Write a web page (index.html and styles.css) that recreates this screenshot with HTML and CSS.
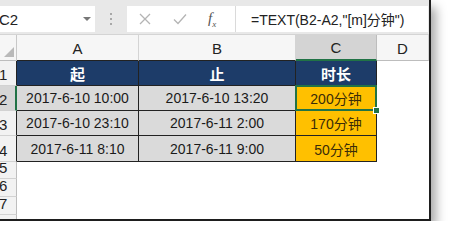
FILE: index.html
```html
<!DOCTYPE html>
<html lang="zh">
<head>
  <meta charset="UTF-8" />
  <title>TEXT 分钟</title>
  <link rel="stylesheet" href="styles.css">
</head>
<body>

  <div class="window">
    <!-- formula bar -->
    <div class="formula-bar">
      <div class="name-box"><span>C2</span><span class="caret"></span></div>
      <div class="grip"><i></i><i></i><i></i></div>
      <div class="buttons">
        <svg class="btn" width="12" height="12" viewBox="0 0 12 12"><path d="M1 1 L11 11 M11 1 L1 11" stroke="#b4b4b4" stroke-width="1.3" fill="none"/></svg>
        <svg class="btn" width="14" height="12" viewBox="0 0 14 12"><path d="M1 6.5 L5 10.5 L13 1.5" stroke="#b4b4b4" stroke-width="1.3" fill="none"/></svg>
        <span class="fx">f<sub>x</sub></span>
      </div>
      <div class="formula">=TEXT(B2-A2,"[m]分钟")</div>
    </div>

    <!-- sheet -->
    <div class="grid">
      <div class="corner"><span class="tri"></span></div>
      <div class="col-head edge">A</div>
      <div class="col-head edge">B</div>
      <div class="col-head selected">C</div>
      <div class="col-head">D</div>

      <div class="row-head edge">1</div>
      <div class="cell title">起</div>
      <div class="cell title">止</div>
      <div class="cell title">时长</div>
      <div class="blank"></div>

      <div class="row-head selected">2</div>
      <div class="cell date">2017-6-10 10:00</div>
      <div class="cell date">2017-6-10 13:20</div>
      <div class="cell result active">200分钟</div>
      <div class="blank"></div>

      <div class="row-head edge">3</div>
      <div class="cell date">2017-6-10 23:10</div>
      <div class="cell date">2017-6-11 2:00</div>
      <div class="cell result">170分钟</div>
      <div class="blank"></div>

      <div class="row-head edge">4</div>
      <div class="cell date">2017-6-11 8:10</div>
      <div class="cell date">2017-6-11 9:00</div>
      <div class="cell result">50分钟</div>
      <div class="blank"></div>

      <div class="row-head">5</div>
      <div class="blank wide"></div>
      <div class="row-head">6</div>
      <div class="blank wide"></div>
      <div class="row-head">7</div>
      <div class="blank wide"></div>
      <div class="row-head"></div>
      <div class="blank wide"></div>
    </div>
  </div>

</body>
</html>
```

FILE: styles.css
```css
body {
  margin: 0;
  background: #fff;
  font-family: 'Liberation Sans', 'Noto Sans CJK SC', sans-serif;
  color: #1a1a1a;
}

.window {
  width: 429px;
  height: 219px;
  border-right: 2px solid #1e1e1e;
  border-bottom: 2px solid #1e1e1e;
  box-shadow: 5px 7px 10px rgba(0, 0, 0, 0.35);
  background: #fff;
  overflow: hidden;
}

/* formula bar */
.formula-bar {
  display: flex;
  height: 35px;
  box-sizing: border-box;
  padding: 6px 1px 2px 0;
  background: #e8e8e8;
  border-bottom: 1px solid #d4d4d4;
}

.name-box {
  width: 95px;
  display: flex;
  align-items: center;
  justify-content: space-between;
  padding-right: 4px;
  box-sizing: border-box;
  background: #fff;
  font-size: 15px;
  color: #222;
  text-indent: -1px;
}

.caret {
  width: 0;
  height: 0;
  border-left: 4px solid transparent;
  border-right: 4px solid transparent;
  border-top: 4px solid #777;
}

.grip {
  width: 32px;
  display: flex;
  flex-direction: column;
  align-items: center;
  justify-content: center;
  gap: 3px;
}

.grip i {
  width: 2px;
  height: 2px;
  background: #a8a8a8;
}

.buttons {
  width: 109px;
  display: flex;
  align-items: center;
  background: #fff;
  border-right: 1px solid #dadada;
  padding-left: 12px;
  box-sizing: border-box;
}

.btn {
  margin-right: 22px;
}

.fx {
  font-family: 'Liberation Serif', serif;
  font-style: italic;
  font-size: 15px;
  color: #555;
  margin-left: -1px;
}

.fx sub {
  font-size: 9px;
}

.formula {
  flex: 1;
  background: #fff;
  font-size: 14px;
  color: #222;
  padding-left: 15px;
  display: flex;
  align-items: center;
}

/* sheet grid */
.grid {
  display: grid;
  grid-template-columns: 17px 122px 157px 81px 52px;
  grid-template-rows: 26px 25px 25px 25px 26px 17px 18px 18px 20px;
}

.grid > div {
  box-sizing: border-box;
}

.corner {
  background: #f6f6f6;
  border-right: 1px solid #c8c8c8;
  border-bottom: 1px solid #bdbdbd;
  position: relative;
}

.tri {
  position: absolute;
  right: 2px;
  bottom: 3px;
  width: 0;
  height: 0;
  border-left: 10px solid transparent;
  border-bottom: 10px solid #b9b9b9;
}

.col-head {
  background: #f6f6f6;
  border-right: 1px solid #d4d4d4;
  border-bottom: 1px solid #bdbdbd;
  font-size: 15px;
  color: #222;
  display: flex;
  align-items: flex-end;
  justify-content: center;
  padding-bottom: 3px;
}

.col-head.edge {
  border-bottom-color: #222;
}

.col-head.selected {
  background: #d4d4d4;
  border-bottom: 2px solid #217346;
  border-right-color: #bdbdbd;
}

.row-head {
  background: #f2f2f2;
  border-right: 1px solid #bdbdbd;
  border-bottom: 1px solid #d2d2d2;
  font-size: 15px;
  color: #222;
  display: flex;
  align-items: flex-end;
  padding-bottom: 2px;
  text-indent: -1px;
}

.row-head.edge {
  border-right-color: #222;
}

.row-head.selected {
  background: #d6d6d6;
  border-right: 2px solid #217346;
}

.cell {
  border-right: 1px solid #222;
  border-bottom: 1px solid #222;
  display: flex;
  align-items: center;
  justify-content: center;
  font-size: 14px;
}

.title {
  background: #1d3c69;
  color: #fff;
  font-weight: bold;
  font-size: 15px;
}

.date {
  background: #dadada;
}

.result {
  background: #ffc000;
  color: #3a2c08;
}

.active {
  position: relative;
}

.active::after {
  content: '';
  position: absolute;
  left: -1px;
  top: -1px;
  right: -1px;
  bottom: -1px;
  border: 2px solid #217346;
}

.active::before {
  content: '';
  position: absolute;
  right: -4px;
  bottom: -4px;
  width: 5px;
  height: 5px;
  background: #217346;
  border: 1px solid #fff;
  z-index: 1;
}

.blank {
  background: #fff;
}

.blank.wide {
  grid-column: span 4;
}
```
